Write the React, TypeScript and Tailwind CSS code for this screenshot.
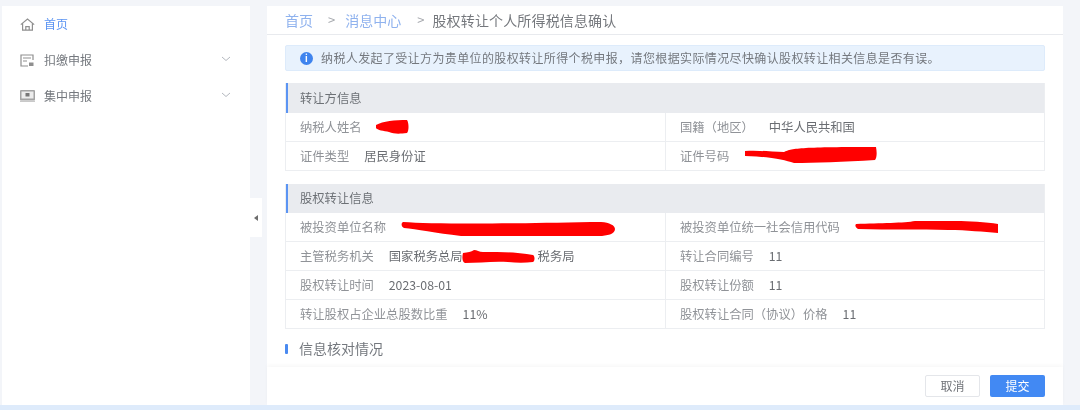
import React from "react";

const FONT = "font-['Noto_Sans_CJK_SC','Noto_Sans',sans-serif]";

function Blob({ w, h, d, className = "" }: { w: number; h: number; d: string; className?: string }) {
  return (
    <svg width={w} height={h} viewBox={`0 0 ${w} ${h}`} className={`inline-block shrink-0 align-middle ${className}`}>
      <path d={d} fill="#ff0000" />
    </svg>
  );
}

function Chevron() {
  return (
    <svg width="10" height="6" viewBox="0 0 10 6" fill="none" stroke="#b4b8bf" strokeWidth="1">
      <path d="M1 1l4 3.5L9 1" />
    </svg>
  );
}

function HomeIcon() {
  return (
    <svg width="15" height="13" viewBox="0 0 15 13" fill="none" stroke="#8f8f8f" strokeWidth="1.2">
      <path d="M.8 6.6 7.5 1l6.7 5.6M2.6 5.4v6.8h9.8V5.4M5.8 12V8.6h3.4V12" />
    </svg>
  );
}

function ReportIcon() {
  return (
    <svg width="14" height="13" viewBox="0 0 14 13" fill="none" stroke="#8f8f8f" strokeWidth="1.2">
      <path d="M13 6V1H1v11h7" />
      <path d="M3 4h8M3 7h4" />
      <rect x="9" y="8.5" width="4.5" height="3.5" fill="#8f8f8f" stroke="none" />
    </svg>
  );
}

function ScreenIcon() {
  return (
    <svg width="15" height="12" viewBox="0 0 15 12">
      <rect x="0" y="0" width="15" height="10.5" rx="1" fill="#a3a3a3" />
      <rect x="1.5" y="1.5" width="12" height="7" fill="#ececec" />
      <rect x="5.5" y="3" width="4" height="3.5" fill="#777777" />
      <rect x="0" y="10.5" width="15" height="1.5" fill="#c9c9c9" />
    </svg>
  );
}

function NavItem({ icon, label, active, chevron, className }: { icon: React.ReactNode; label: string; active?: boolean; chevron?: boolean; className: string }) {
  return (
    <div className={`flex items-center pl-[18px] pr-[19px] ${className}`}>
      <span className="flex w-[24px] shrink-0 items-center">{icon}</span>
      <span className={`text-[12px] ${active ? "text-[#5b94f3]" : "text-[#74787e]"}`}>{label}</span>
      {chevron && (
        <span className="ml-auto -mt-[3px]">
          <Chevron />
        </span>
      )}
    </div>
  );
}

function SectionHeader({ title, height }: { title: string; height: string }) {
  return (
    <div className={`flex items-center border-l-[2px] border-l-[#5b94f3] bg-[#e9ebef] pl-[12px] text-[12.3px] text-[#6d7176] ${height}`}>
      {title}
    </div>
  );
}

function Cell({ label, children, right, height }: { label: string; children: React.ReactNode; right?: boolean; height: string }) {
  return (
    <div className={`flex items-center whitespace-nowrap ${right ? "border-l border-[#eceef1] pl-[14px]" : "pl-[14px]"} ${height}`}>
      <span className="mr-[15px] text-[12.3px] text-[#909398]">{label}</span>
      <span className="flex items-center text-[12.3px] text-[#6a6d72]">{children}</span>
    </div>
  );
}

function Row({ left, right, height, last }: { left: React.ReactNode; right: React.ReactNode; height?: string; last?: boolean }) {
  return (
    <div className={`grid grid-cols-[379px_1fr] ${last ? "" : "border-b border-[#eceef1]"} ${height ?? ""}`}>
      {left}
      {right}
    </div>
  );
}

export default function App() {
  return (
    <div className={`${FONT} flex h-[410px] w-[1080px] flex-col overflow-hidden bg-[#f3f5f9] blur-[0.5px] [text-spacing-trim:space-all]`}>
      <div className="flex min-h-0 flex-1 pt-[6px]">
        {/* sidebar */}
        <aside className="ml-[2px] w-[248px] shrink-0 bg-white pt-[6px]">
          <NavItem icon={<HomeIcon />} label="首页" active className="h-[24px]" />
          <NavItem icon={<ReportIcon />} label="扣缴申报" chevron className="mt-[12px] h-[24px]" />
          <NavItem icon={<ScreenIcon />} label="集中申报" chevron className="mt-[12px] h-[24px]" />
        </aside>

        {/* collapse handle */}
        <div className="flex w-[17px] shrink-0 flex-col pt-[192px]">
          <div className="flex h-[39px] w-[12px] items-center justify-center bg-white">
            <span className="block h-0 w-0 border-y-[3px] border-r-[4px] border-y-transparent border-r-[#6d6d6d]" />
          </div>
        </div>

        {/* main */}
        <main className="flex w-[796px] shrink-0 flex-col bg-white">
          <div className="flex h-[29px] shrink-0 items-center border-b border-[#e8eaee] pl-[18px] text-[14px]">
            <span className="text-[#8fb2ee]">首页</span>
            <span className="ml-[15px] mr-[10px] text-[13px] text-[#a5a8ad]">&gt;</span>
            <span className="text-[#8fb2ee]">消息中心</span>
            <span className="ml-[16px] mr-[8px] text-[13px] text-[#a5a8ad]">&gt;</span>
            <span className="tracking-[0.15px] text-[#75787d]">股权转让个人所得税信息确认</span>
          </div>

          <div className="min-h-0 flex-1 overflow-hidden px-[18px] pt-[10px]">
            <div className="flex h-[26px] items-center rounded-[2px] border border-[#ddebfb] bg-[#e8f2fd] pl-[14px] text-[12px] tracking-[0.38px] text-[#74787e]">
              <span className="mr-[8px] flex h-[13px] w-[13px] items-center justify-center rounded-full bg-[#3f84ee] text-[9px] font-bold leading-none text-white">i</span>
              纳税人发起了受让方为贵单位的股权转让所得个税申报，请您根据实际情况尽快确认股权转让相关信息是否有误。
            </div>

            <section className="mt-[12px] border-x border-b border-[#eceef1]">
              <SectionHeader title="转让方信息" height="h-[30px]" />
              <Row
                height="h-[29px]"
                left={
                  <Cell label="纳税人姓名" height="h-full">
                    <Blob w={34} h={14} className="-ml-[2px]" d="M1 5C8 1 20 0 32 0c2 3 2 11 0 13-8 1-13 1-18-1C9 11 2 10 1 8z" />
                  </Cell>
                }
                right={
                  <Cell label="国籍（地区）" right height="h-full">
                    中华人民共和国
                  </Cell>
                }
              />
              <Row
                height="h-[28px]"
                last
                left={
                  <Cell label="证件类型" height="h-full">
                    居民身份证
                  </Cell>
                }
                right={
                  <Cell label="证件号码" right height="h-full">
                    <Blob w={133} h={16} className="-mt-[2px]" d="M1 4C15 3 28 5 40 5 48 1 60 0 132 0c1 5 1 11-1 13-31 2-61 3-81 3C40 13 30 10 1 9z" />
                  </Cell>
                }
              />
            </section>

            <section className="mt-[13px] border-x border-b border-[#eceef1]">
              <SectionHeader title="股权转让信息" height="h-[29px]" />
              <Row
                height="h-[29px]"
                left={
                  <Cell label="被投资单位名称" height="h-full">
                    <Blob w={214} h={14} className="mt-[3px]" d="M2 0C30 2 100 2 190 0c14-1 24 2 24 7s-8 7-16 7C140 15 90 15 60 14 35 11 15 7 3 6 0 5 0 1 2 0z" />
                  </Cell>
                }
                right={
                  <Cell label="被投资单位统一社会信用代码" right height="h-full">
                    <Blob w={144} h={12} d="M1 3C25 2 50 2 60 0c15-1 30-1 42 0 10 0 30 1 41 3v9c-15-1-30-3-50-3C65 8 35 9 3 8 0 6 0 4 1 3z" />
                  </Cell>
                }
              />
              <Row
                height="h-[29px]"
                left={
                  <Cell label="主管税务机关" height="h-full">
                    国家税务总局
                    <Blob w={73} h={13} className="-ml-[1px]" d="M1 3c5-1 8-1 11-3 3 0 5 2 9 2 15 0 35 0 50 3 2 1 2 6 0 7-8 1-16 1-25 0-15-1-30 1-43 1C0 12 0 7 1 3z" />
                    <span className="ml-[3px]">税务局</span>
                  </Cell>
                }
                right={
                  <Cell label="转让合同编号" right height="h-full">
                    11
                  </Cell>
                }
              />
              <Row
                height="h-[29px]"
                left={
                  <Cell label="股权转让时间" height="h-full">
                    2023-08-01
                  </Cell>
                }
                right={
                  <Cell label="股权转让份额" right height="h-full">
                    11
                  </Cell>
                }
              />
              <Row
                height="h-[28px]"
                last
                left={
                  <Cell label="转让股权占企业总股数比重" height="h-full">
                    11%
                  </Cell>
                }
                right={
                  <Cell label="股权转让合同（协议）价格" right height="h-full">
                    11
                  </Cell>
                }
              />
            </section>

            <div className="mt-[9px] flex items-center">
              <span className="mr-[11px] h-[10px] w-[3px] rounded-[1px] bg-[#4a8af0]" />
              <span className="text-[14px] text-[#74787e]">信息核对情况</span>
            </div>
          </div>

          <div className="flex h-[38px] shrink-0 items-center justify-end gap-[10px] bg-white pr-[18px] shadow-[0_-2px_4px_rgba(0,0,0,0.03)]">
            <button className="flex h-[22px] w-[55px] items-center justify-center rounded-[2px] border border-[#e4e6ea] bg-white text-[12px] text-[#707378]">取消</button>
            <button className="flex h-[22px] w-[55px] items-center justify-center rounded-[2px] bg-[#4289f3] text-[12px] text-white">提交</button>
          </div>
        </main>
      </div>
      <div className="h-[5px] shrink-0 bg-[#deebfb]" />
    </div>
  );
}
